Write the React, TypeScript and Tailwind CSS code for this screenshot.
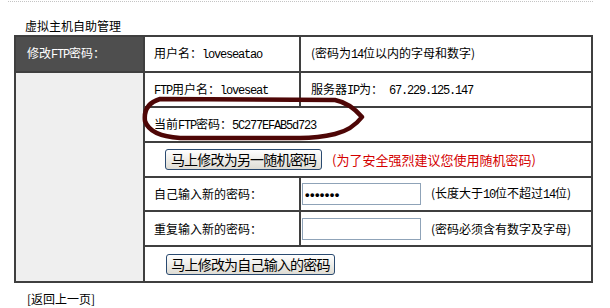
import React from "react";

// Latin runs use a narrow mono face, like the bitmap font of the original
const M = ({ children }: { children: React.ReactNode }) => (
  <span className="font-['Liberation_Mono',monospace] text-[12px] tracking-[-1.2px]">{children}</span>
);

const XpButton = ({ children, width }: { children: React.ReactNode; width: string }) => (
  <button
    className={`${width} h-[21px] flex items-center justify-center whitespace-nowrap rounded-[3px] border border-[#2a4a70] bg-linear-to-b from-white to-[#dedcd4] text-[14px] leading-[19px] tracking-[-0.8px] text-black`}
  >
    {children}
  </button>
);

const cell = "border-2 border-[#3f3f3f]";

export default function App() {
  return (
    <div className="relative w-[610px] h-[308px] bg-white text-[12px] text-black font-['Noto_Sans_CJK_SC','Liberation_Sans',sans-serif] overflow-hidden">
      <div className="ml-[8px] w-[585px] border-t border-dotted border-[#c4c4c4] mt-[1px]" />
      <div className="pl-[25px] pt-[17px] h-[33px] leading-[14px]">虚拟主机自助管理</div>

      <table className="ml-[14px] w-[579px] table-fixed">
        <colgroup>
          <col className="w-[129px]" />
          <col className="w-[156px]" />
          <col />
        </colgroup>
        <tbody>
          <tr className="h-[36px]">
            <td className={`${cell} bg-[#4e4e4e] text-white pl-[11px]`}>
              修改<M>FTP</M>密码：
            </td>
            <td className={`${cell} pl-[9px]`}>
              用户名：<M>loveseatao</M>
            </td>
            <td className={`${cell} pl-[10px]`}>
              (密码为<M>14</M>位以内的字母和数字)
            </td>
          </tr>
          <tr className="h-[35px]">
            <td rowSpan={6} className={`${cell} bg-[#efefef]`} />
            <td className={`${cell} pl-[9px]`}>
              <M>FTP</M>用户名：<M>loveseat</M>
            </td>
            <td className={`${cell} pl-[10px]`}>
              服务器<M>IP</M>为：<M>&nbsp;67.229.125.147</M>
            </td>
          </tr>
          <tr className="h-[35px]">
            <td colSpan={2} className={`${cell} pl-[9px]`}>
              当前<M>FTP</M>密码：<M>5C277EFAB5d723</M>
            </td>
          </tr>
          <tr className="h-[35px]">
            <td colSpan={2} className={`${cell} pl-[20px]`}>
              <div className="flex items-center gap-[10px]">
                <XpButton width="w-[157px]">马上修改为另一随机密码</XpButton>
                <span className="text-[13px] text-[#d40000]">(为了安全强烈建议您使用随机密码)</span>
              </div>
            </td>
          </tr>
          <tr className="h-[34px]">
            <td className={`${cell} pl-[9px]`}>自己输入新的密码：</td>
            <td className={`${cell} pl-[1px]`}>
              <div className="flex items-center gap-[10px]">
                <input
                  type="password"
                  defaultValue="1234567"
                  className="w-[119px] h-[22px] border border-[#8fa3b8] px-[2px] font-['Liberation_Sans',sans-serif] text-[13px] font-bold tracking-[0.4px] outline-none"
                />
                <span>(长度大于<M>10</M>位不超过<M>14</M>位)</span>
              </div>
            </td>
          </tr>
          <tr className="h-[35px]">
            <td className={`${cell} pl-[9px]`}>重复输入新的密码：</td>
            <td className={`${cell} pl-[1px]`}>
              <div className="flex items-center gap-[10px]">
                <input
                  type="password"
                  className="w-[119px] h-[22px] border border-[#8fa3b8] px-[2px] text-[12px] outline-none"
                />
                <span>(密码必须含有数字及字母)</span>
              </div>
            </td>
          </tr>
          <tr className="h-[36px]">
            <td colSpan={2} className={`${cell} pl-[21px]`}>
              <XpButton width="w-[169px]">马上修改为自己输入的密码</XpButton>
            </td>
          </tr>
        </tbody>
      </table>

      <div className="pl-[27px] pt-[9px] leading-[14px]">[返回上一页]</div>

      {/* hand-drawn marker ring around the current password */}
      <svg className="absolute left-0 top-0 pointer-events-none" width="610" height="308">
        <path
          d="M160 99 L335 100 Q350 103 362 117 Q352 130 335 134 Q318 138 300 138 L180 138 Q150 136 145 121 Q143 104 160 99 Z"
          fill="none"
          stroke="#4e0606"
          strokeWidth="4.5"
          strokeLinejoin="round"
        />
      </svg>
    </div>
  );
}
